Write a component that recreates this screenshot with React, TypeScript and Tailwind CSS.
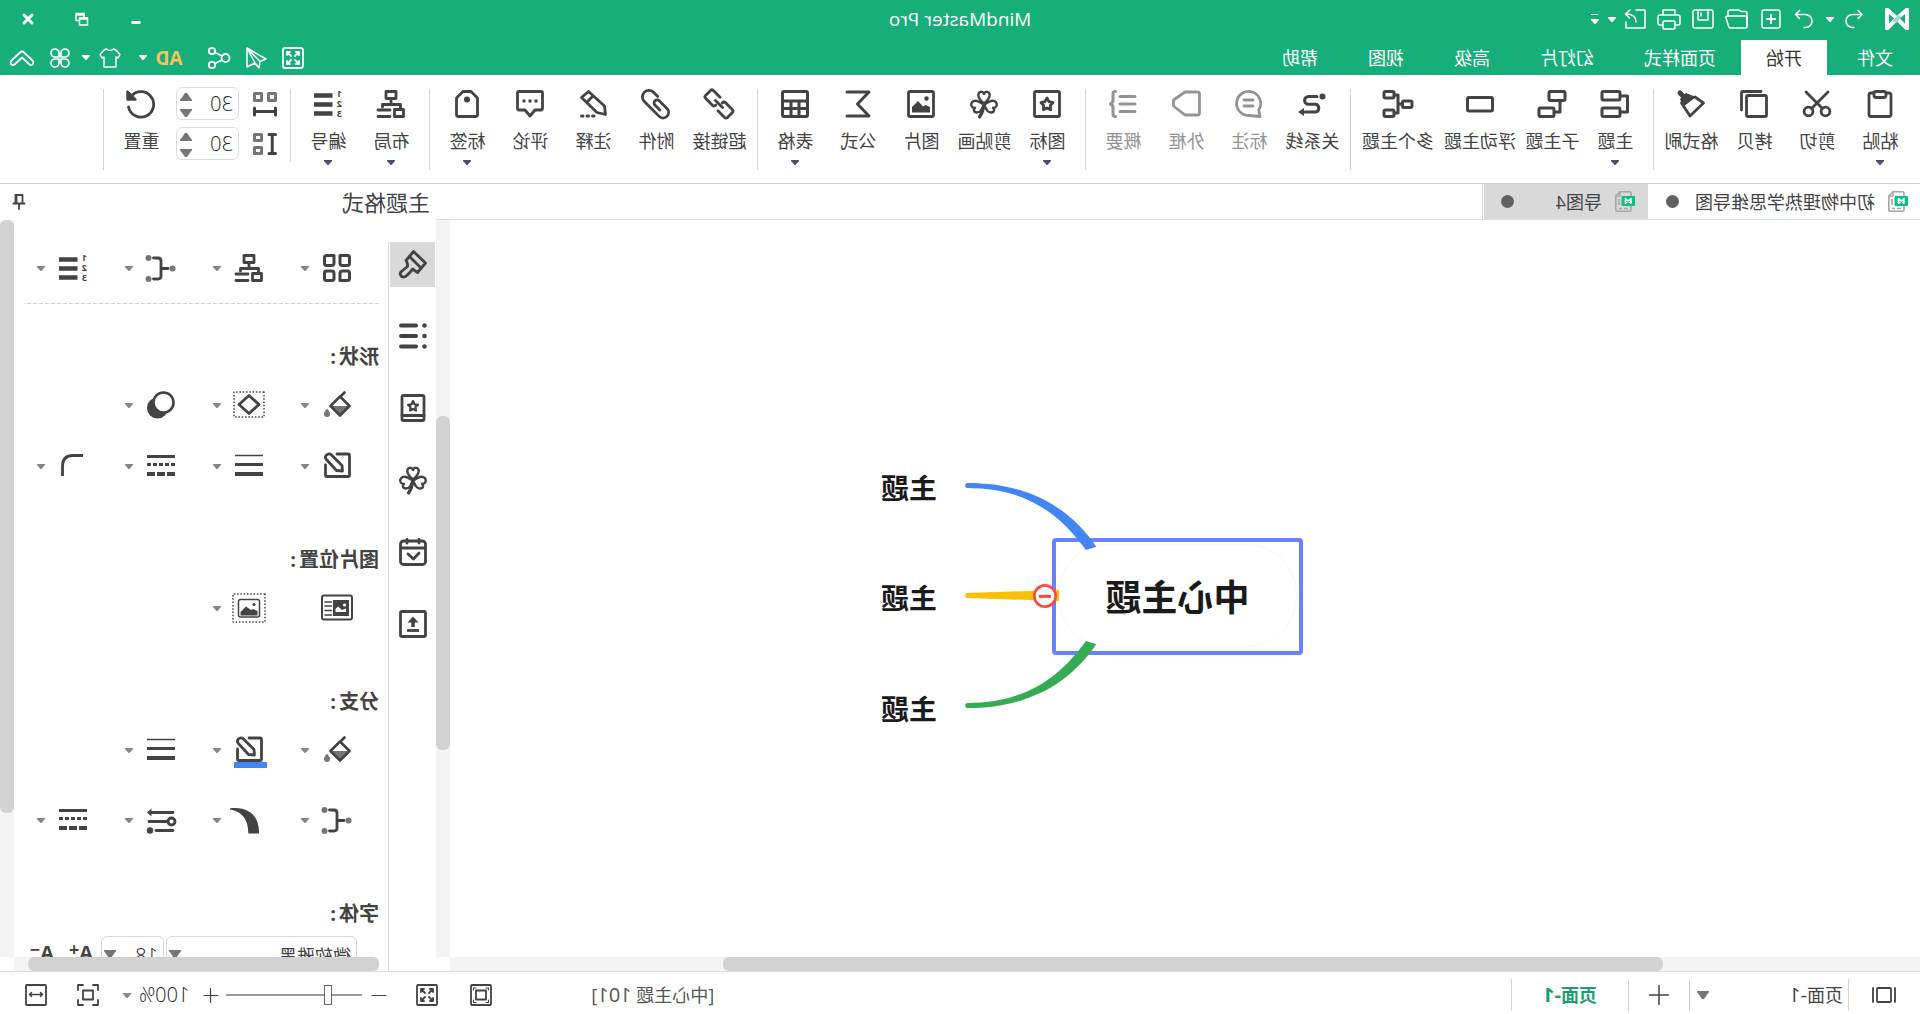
import type { ReactNode } from 'react'

type GlyphProps = { children: ReactNode; w?: number; h?: number; sw?: number }

function Glyph({ children, w = 28, h = 28, sw = 2.4 }: GlyphProps) {
  return (
    <svg
      width={w}
      height={h}
      viewBox={`0 0 ${w} ${h}`}
      fill="none"
      stroke="currentColor"
      strokeWidth={sw}
      strokeLinecap="round"
      strokeLinejoin="round"
      className="block shrink-0 overflow-visible"
      aria-hidden="true"
    >
      {children}
    </svg>
  )
}

const solid = { fill: 'currentColor', stroke: 'none' }

function Caret({ className = 'text-[#757575]' }: { className?: string }) {
  return (
    <svg width="8" height="5" viewBox="0 0 8 5" className={`block shrink-0 ${className}`} aria-hidden="true">
      <path d="M0 0H8V1L4.5 5H3.5L0 1Z" fill="currentColor" />
    </svg>
  )
}

function Triangle({ className = '' }: { className?: string }) {
  return (
    <svg width="12" height="8" viewBox="0 0 12 8" className={`block shrink-0 text-[#757575] ${className}`} aria-hidden="true">
      <path d="M0 0H12V1L7 8H5L0 1Z" fill="currentColor" />
    </svg>
  )
}

/* ---------- shared drawings ---------- */

const clover = (
  <>
    <path d="M14 13.5C11 11 8.3 8.5 8.3 5.3C8.3 1.5 12.6 0.5 14 4C15.4 0.5 19.7 1.5 19.7 5.3C19.7 8.5 17 11 14 13.5Z" />
    <path d="M13.5 14.5C12.5 18.5 10.5 22.5 7 22.5C3.5 22.5 3.2 19 5 17.8C1.5 18.5 0.3 14.5 2 12.3C4.5 9.3 9.5 11.5 13.5 14.5Z" />
    <path d="M14.5 14.5C15.5 18.5 17.5 22.5 21 22.5C24.5 22.5 24.8 19 23 17.8C26.5 18.5 27.7 14.5 26 12.3C23.5 9.3 18.5 11.5 14.5 14.5Z" />
    <path d="M14 14C14.5 19 16 23.5 18.5 27" strokeWidth="3.2" />
  </>
)

const star = 'M14 8L16 11.6L20 12.5L17.3 15.5L17.7 19.6L14 18L10.3 19.6L10.7 15.5L8 12.5L12 11.6Z'

const numbering = (
  <>
    <path d="M9.5 5.5H28M9.5 14.5H28M9.5 23.5H28" strokeWidth="4.5" strokeLinecap="butt" />
    <g {...solid} fontSize="9" fontWeight="700" fontFamily="'Open Sans', sans-serif">
      <text x="0" y="7">1</text>
      <text x="0" y="17">2</text>
      <text x="0" y="27">3</text>
    </g>
  </>
)

const orgChart = (
  <g strokeWidth="2.8">
    <rect x="9" y="1.5" width="10" height="7" />
    <path d="M14 9V14M4.5 18V14.5H22.5V17" />
    <rect x="1.5" y="19.5" width="9" height="7" />
    <path d="M15 20H27M15 26.5H27" />
  </g>
)

const structure = (
  <>
    <g fill="#757575" stroke="none">
      <circle cx="2.5" cy="14.5" r="3" />
      <circle cx="26.5" cy="4" r="3" />
      <circle cx="26.5" cy="25" r="3" />
    </g>
    <path d="M7 14.5H14M21.5 4H17Q14 4 14 7V22Q14 25 17 25H21.5" strokeWidth="2.8" />
  </>
)

const bucket = (
  <>
    <path d="M1.5 15L11 24.5L20.5 15Z" fill="#757575" stroke="none" />
    <path d="M6.5 1.5L11 6M11 5.5L1.5 15L11 24.5L20.5 15Z" strokeWidth="2.6" />
    <path d="M24 17.5C26 20 27 21.5 27 23A3 3 0 0 1 21 23C21 21.5 22 20 24 17.5Z" fill="#757575" stroke="none" />
  </>
)

const penSquare = (
  <g strokeWidth="2.8">
    <path d="M14 2H3Q1.5 2 1.5 3.5V23Q1.5 24.5 3 24.5H24Q25.5 24.5 25.5 23V13" />
    <path d="M20 2.5Q22.5 1 24.5 3Q26.5 5 25 7L14.5 18.5L8.5 19L9 13.5Z" />
  </g>
)

const lineWeights = (
  <g strokeLinecap="butt">
    <path d="M0 3.5H28" strokeWidth="1.5" />
    <path d="M0 12.5H28" strokeWidth="3" />
    <path d="M0 22H28" strokeWidth="4" />
  </g>
)

const dashStyles = (
  <g strokeLinecap="butt">
    <path d="M0 4.5H28" strokeWidth="3" />
    <path d="M0 12.5H28" strokeWidth="3" strokeDasharray="4 2" />
    <path d="M0 22H28" strokeWidth="4" strokeDasharray="8 2" />
  </g>
)

const expandArrows = (
  <path d="M5 8V5H8M5 5L9 9M14 5H17V8M17 5L13 9M5 14V17H8M5 17L9 13M17 14V17H14M17 17L13 13" />
)

const cornerMarks = 'M1 6V1H6M16 1H21V6M1 16V21H6M16 21H21V16'

/* ---------- ribbon data ---------- */

type Tool = { label: string; icon: ReactNode; menu?: boolean; disabled?: boolean }

const groups: Tool[][] = [
  [
    {
      label: '粘贴',
      menu: true,
      icon: (
        <g strokeWidth="2.8">
          <rect x="3" y="3" width="22" height="23.5" rx="2" />
          <rect x="8" y="1.5" width="12" height="6" rx="2" fill="white" />
        </g>
      ),
    },
    {
      label: '剪切',
      icon: (
        <g strokeWidth="2.8">
          <path d="M3 2L19.5 18.5M25 2L8.5 18.5" />
          <circle cx="5.5" cy="21.5" r="4.4" />
          <circle cx="22.5" cy="21.5" r="4.4" />
        </g>
      ),
    },
    {
      label: '拷贝',
      icon: (
        <g strokeWidth="2.8">
          <rect x="1.5" y="5.5" width="20" height="21" rx="1.5" />
          <path d="M7 1.5H25Q26.5 1.5 26.5 3V20" />
        </g>
      ),
    },
    {
      label: '格式刷',
      icon: (
        <>
          <path d="M10 7L1.5 13L15 26L23.5 13" strokeWidth="2.8" />
          <path d="M9 7L19 3L25 9L22 17Z" {...solid} />
          <path d="M20 8L25 3" strokeWidth="5" />
        </>
      ),
    },
  ],
  [
    {
      label: '主题',
      menu: true,
      icon: (
        <g strokeWidth="3">
          <rect x="9" y="1.5" width="18" height="8.5" rx="1.5" />
          <rect x="9" y="18" width="18" height="8.5" rx="1.5" />
          <path d="M8 6H1.5V22H8" />
        </g>
      ),
    },
    {
      label: '子主题',
      icon: (
        <g strokeWidth="3">
          <rect x="1" y="1.5" width="16" height="9" rx="1.5" />
          <rect x="12" y="18" width="15" height="8.5" rx="1.5" />
          <path d="M6 11V22H11" />
        </g>
      ),
    },
    { label: '浮动主题', icon: <rect x="1.5" y="7.5" width="25" height="13.5" rx="1.5" strokeWidth="3" /> },
    {
      label: '多个主题',
      icon: (
        <g strokeWidth="3">
          <rect x="0" y="11" width="9.5" height="6.5" rx="1.5" />
          <rect x="18" y="1.5" width="10" height="6.5" rx="1.5" />
          <rect x="18" y="20" width="10" height="6.5" rx="1.5" />
          <path d="M10 14H14M17 5H14V23H17" />
        </g>
      ),
    },
  ],
  [
    {
      label: '关系线',
      icon: (
        <>
          <circle cx="3.5" cy="6.5" r="3" {...solid} />
          <path d="M9 6.5H17.5A3.9 3.9 0 0 1 17.5 14.3H10.5A3.9 3.9 0 0 0 10.5 22H21" strokeWidth="3" />
          <path d="M22 18L28 22L22 26Z" {...solid} />
        </>
      ),
    },
    {
      label: '标注',
      disabled: true,
      icon: (
        <g strokeWidth="2.8">
          <path d="M3 26.5L4.3 20A12 12 0 1 1 14 25.5Z" />
          <path d="M10 10H19M10 16H19" />
        </g>
      ),
    },
    {
      label: '外框',
      disabled: true,
      icon: <path d="M2.5 2H15L26.5 10V16L15 25H2.5Q0.5 25 0.5 23V4Q0.5 2 2.5 2Z" strokeWidth="2.8" />,
    },
    {
      label: '概要',
      disabled: true,
      icon: (
        <g strokeWidth="3">
          <path d="M2 6.5H17M2 14H17M2 21.5H17" />
          <path d="M21.5 1.5H22Q24 1.5 24 4V10Q24 13 26.5 14Q24 15 24 18V24Q24 26.5 22 26.5H21.5" />
        </g>
      ),
    },
  ],
  [
    {
      label: '图标',
      menu: true,
      icon: (
        <g strokeWidth="2.8">
          <rect x="1.5" y="1.5" width="25" height="25" rx="1.5" />
          <path d={star} />
        </g>
      ),
    },
    { label: '剪贴画', icon: clover },
    {
      label: '图片',
      icon: (
        <>
          <rect x="1.5" y="1.5" width="25" height="25" rx="1.5" strokeWidth="2.8" />
          <path d="M5 17L9.5 15L12 16.5L17 11L23 17V22.5H5Z" {...solid} />
          <circle cx="8.5" cy="8.5" r="2.2" {...solid} />
        </>
      ),
    },
    { label: '公式', icon: <path d="M25 2H3L14.5 14L3 26H25" strokeWidth="3" /> },
    {
      label: '表格',
      menu: true,
      icon: (
        <g strokeWidth="3">
          <rect x="1.5" y="1.5" width="25" height="25" rx="1.5" />
          <path d="M1.5 11H26.5M1.5 18.5H26.5M10 11V26.5M18 11V26.5" />
        </g>
      ),
    },
  ],
  [
    {
      label: '超链接',
      icon: (
        <g transform="rotate(-45 14 14)" strokeWidth="2.8">
          <path d="M10 19.5H0.5Q-1.5 19.5 -1.5 17.5V10.5Q-1.5 8.5 0.5 8.5H10.5Q12.5 8.5 12.5 11" />
          <path d="M18 8.5H27.5Q29.5 8.5 29.5 10.5V17.5Q29.5 19.5 27.5 19.5H17.5Q15.5 19.5 15.5 17" />
          <path d="M9 14H19" />
        </g>
      ),
    },
    {
      label: '附件',
      icon: (
        <path
          transform="rotate(-45 14 14)"
          d="M18 7.5H24A6.5 6.5 0 0 1 24 20.5H3A5.5 5.5 0 0 1 3 9.5H14A3 3 0 0 1 14 15.5H7"
          strokeWidth="2.8"
        />
      ),
    },
    {
      label: '注释',
      icon: (
        <>
          <path d="M18.5 1.5L2.5 16L1.5 24.5L10 22.5L25.5 7.5ZM14 6L20.5 12.5" strokeWidth="2.8" />
          <path d="M13 26H14.5M18.5 26H20M24 26H25.5" strokeWidth="3" />
        </>
      ),
    },
    {
      label: '评论',
      icon: (
        <>
          <path
            d="M3 1.5H25Q26.5 1.5 26.5 3V18Q26.5 20 25 20H19L14 26L9 20H3Q1.5 20 1.5 18V3Q1.5 1.5 3 1.5Z"
            strokeWidth="2.8"
          />
          <path d="M6.5 11H9.5M12.5 11H15.5M18.5 11H21.5" strokeWidth="3" strokeLinecap="butt" />
        </>
      ),
    },
    {
      label: '标签',
      menu: true,
      icon: (
        <>
          <path d="M10 1.5H18L24.5 8V24.5Q24.5 26.5 22.5 26.5H5.5Q3.5 26.5 3.5 24.5V8Z" strokeWidth="2.8" />
          <circle cx="14" cy="9.5" r="3" {...solid} />
        </>
      ),
    },
  ],
  [
    { label: '布局', menu: true, icon: orgChart },
    { label: '编号', menu: true, icon: numbering },
  ],
]

function ToolButton({ label, icon, menu, disabled }: Tool) {
  return (
    <button
      type="button"
      disabled={disabled}
      className={`flex flex-col items-center pt-px ${label.length > 3 ? 'w-[82px]' : 'w-[63px]'} ${
        disabled ? 'text-[#949494]' : 'text-[#434343]'
      }`}
    >
      <Glyph>{icon}</Glyph>
      <span className="mt-[11px] whitespace-nowrap leading-6">{label}</span>
      {menu && <Caret className="mt-[7px] text-[#4a4f63]" />}
    </button>
  )
}

function Spinner({ label }: { label: string }) {
  return (
    <div className="flex h-[33px] w-[63px] items-center justify-between rounded-md border border-[#dcdcdc] pl-[5px] pr-[3px]">
      <input
        aria-label={label}
        defaultValue="30"
        className="w-8 bg-transparent text-[20px] font-light text-[#222222] outline-none"
      />
      <div className="flex flex-col gap-2 pt-[3px]">
        <button type="button" aria-label={`${label}增加`}>
          <Triangle className="rotate-180" />
        </button>
        <button type="button" aria-label={`${label}减少`}>
          <Triangle />
        </button>
      </div>
    </div>
  )
}

/* ---------- header ---------- */

const fileActions = [
  { name: '重做', icon: <path d="M15.5 1.5L19.5 5.5L15.5 9.5M19.5 5.5H9.5A6.5 6.5 0 0 0 9.5 18.5H11" /> },
  {
    name: '新建',
    icon: (
      <>
        <rect x="1" y="1" width="18" height="18" rx="2" />
        <path d="M10 6V14M6 10H14" strokeWidth="2" />
      </>
    ),
  },
  {
    name: '打开',
    icon: (
      <>
        <path d="M0 18V4Q0 2.5 1.5 2.5H6L8 1H17Q19 1 19 3V7" />
        <path d="M0 17.5V9Q0 7 2 7H19Q21.5 7 21 9L18.5 17Q18 19 16.5 19H1.5Q0 19 0 17.5Z" />
      </>
    ),
  },
  {
    name: '保存',
    icon: (
      <>
        <rect x="0" y="1" width="20" height="18" rx="2" />
        <path d="M5 1V11H15V1M12 4V7" />
      </>
    ),
  },
  {
    name: '打印',
    icon: (
      <>
        <path d="M4 6V1H16V6M4 16H1Q-1 16 -1 14V8Q-1 6 1 6H19Q21 6 21 8V14Q21 16 19 16H16" />
        <rect x="4" y="12" width="12" height="8" rx="1" />
      </>
    ),
  },
  {
    name: '导出',
    icon: <path d="M9 1H0V19H19V13M9 13Q9 5 19 5M15 1L19.5 5L15.5 9" />,
  },
]

const menuTabs = ['文件', '开始', '页面样式', '幻灯片', '高级', '视图', '帮助']

function TitleBar() {
  return (
    <div className="grid h-10 grid-cols-[1fr_auto_1fr] items-center pb-[2px] text-white">
      <div className="flex items-center pl-[11px]">
        <svg width="24" height="22" viewBox="0 0 24 22" className="mr-[15px] block" aria-label="MindMaster" role="img">
          <path d="M2 1.5V20.5L12 10.5Z" fill="none" stroke="white" strokeWidth="4" strokeLinejoin="round" />
          <path d="M22 1.5V20.5L12 10.5Z" fill="none" stroke="white" strokeWidth="4" strokeLinejoin="round" />
          <path d="M9 8L14.5 14" stroke="#9fdcc6" strokeWidth="4" />
        </svg>
        <button type="button" aria-label="撤销" className="flex w-8 justify-center">
          <Glyph w={20} h={20} sw={1.5}>
            <path d="M6 1.5L2 5.5L6 9.5M2 5.5H11.5A6.5 6.5 0 0 1 11.5 18.5H10" />
          </Glyph>
        </button>
        <button type="button" aria-label="撤销记录" className="flex w-4 justify-center">
          <Caret className="text-white" />
        </button>
        {fileActions.map((a) => (
          <button key={a.name} type="button" aria-label={a.name} className="flex w-[34px] justify-center">
            <Glyph w={20} h={20} sw={1.5}>
              {a.icon}
            </Glyph>
          </button>
        ))}
        <button type="button" aria-label="导出选项" className="flex w-3 justify-center">
          <Caret className="text-white" />
        </button>
        <button type="button" aria-label="自定义工具栏" className="flex w-[22px] flex-col items-center gap-1">
          <span className="h-px w-[7px] bg-white" />
          <Caret className="text-white" />
        </button>
      </div>
      <h1 className="text-[19px] leading-6">MindMaster Pro</h1>
      <div className="flex items-center justify-end pr-px">
        <button type="button" aria-label="最小化" className="flex w-[54px] justify-center">
          <Glyph w={12} h={12}>
            <path d="M1.5 9.5H10.5" strokeWidth="3" strokeLinecap="butt" />
          </Glyph>
        </button>
        <button type="button" aria-label="还原" className="flex w-[54px] justify-center">
          <Glyph w={12} h={12}>
            <g strokeWidth="1.5" strokeLinejoin="miter">
              <path d="M4 4V0.5H12V7.5H9" />
              <path d="M3.5 1.5H12" strokeWidth="2.5" strokeLinecap="butt" />
              <rect x="0.5" y="5" width="8" height="7" />
              <path d="M0 5.5H9" strokeWidth="2.5" strokeLinecap="butt" />
            </g>
          </Glyph>
        </button>
        <button type="button" aria-label="关闭" className="flex w-[54px] justify-center">
          <Glyph w={12} h={12}>
            <path d="M2 2L10 10M10 2L2 10" strokeWidth="3" />
          </Glyph>
        </button>
      </div>
    </div>
  )
}

function MenuBar() {
  return (
    <div className="flex h-[35px] items-stretch justify-between text-white">
      <nav className="flex">
        {menuTabs.map((t, i) => (
          <button
            key={t}
            type="button"
            className={`${i === 0 ? 'pl-[27px] pr-[30px]' : 'px-[25px]'} ${t === '开始' ? 'bg-white text-[#333333]' : ''}`}
          >
            {t}
          </button>
        ))}
      </nav>
      <div className="flex items-center pr-[2px]">
        <button type="button" aria-label="全屏" className="flex w-[37px] justify-center">
          <Glyph w={22} h={22} sw={1.8}>
            <rect x="1" y="1" width="20" height="20" rx="2" />
            {expandArrows}
          </Glyph>
        </button>
        <button type="button" aria-label="发送" className="flex w-[37px] justify-center">
          <Glyph w={22} h={22} sw={1.5}>
            <path d="M20 1L1 12L7 14.5L8 21L12 16L20 20ZM20 1L7 14.5M20 1L12 16" />
          </Glyph>
        </button>
        <button type="button" aria-label="分享" className="flex w-[37px] justify-center">
          <Glyph w={22} h={22} sw={1.8}>
            <circle cx="4.5" cy="11" r="4" />
            <circle cx="18" cy="4" r="3.2" />
            <circle cx="18" cy="18" r="3.2" />
            <path d="M8 9L15 5.5M8 13L15 16.5" />
          </Glyph>
        </button>
        <button type="button" className="ml-[14px] w-9 text-[19px] font-bold text-[#f9c35c]">
          AD
        </button>
        <button type="button" aria-label="广告选项" className="flex w-4 justify-center">
          <Caret className="text-white" />
        </button>
        <button type="button" aria-label="皮肤" className="ml-[9px] flex w-8 justify-center">
          <Glyph w={20} h={20} sw={1.5}>
            <path d="M6.5 1Q10 4 13.5 1L16 2L20 6.5L18 10L16 9V19H4V9L2 10L0 6.5L4 2Z" />
          </Glyph>
        </button>
        <button type="button" aria-label="皮肤选项" className="flex w-4 justify-center">
          <Caret className="text-white" />
        </button>
        <button type="button" aria-label="应用" className="flex w-9 justify-center">
          <Glyph w={20} h={20} sw={1.7}>
            <path d="M9 9H5A4 4 0 1 1 9 5ZM11 9V5A4 4 0 1 1 15 9ZM9 11V15A4 4 0 1 1 5 11ZM11 11H15A4 4 0 1 1 11 15Z" />
          </Glyph>
        </button>
        <button type="button" aria-label="收起功能区" className="flex w-10 justify-center">
          <Glyph w={26} h={16} sw={1.8}>
            <path d="M13 1.5Q14 1.5 15 2.5L24 11Q25 13 23.5 14.5Q22 15.5 20.5 14.5L13 7.5L5.5 14.5Q4 15.5 2.5 14.5Q1 13 2 11L11 2.5Q12 1.5 13 1.5Z" />
          </Glyph>
        </button>
      </div>
    </div>
  )
}

function Ribbon() {
  return (
    <div className="flex border-b border-[#cfcfcf] pb-[13px] pl-[2px] pt-[14px] text-[#434343]">
      {groups.map((g, i) => (
        <div
          key={i}
          className={`flex items-start border-r border-[#d2d2d2] px-[6px] ${i === groups.length - 1 ? 'h-[73px]' : 'h-[81px]'}`}
        >
          {g.map((t) => (
            <ToolButton key={t.label} {...t} />
          ))}
        </div>
      ))}
      <div className="flex h-[81px] items-start border-r border-[#d2d2d2] pl-[13px] pr-[6px]">
        <div className="-mt-[2px] flex flex-col gap-[7px]">
          <div className="flex items-center gap-[14px]">
            <Glyph w={24} h={24}>
              <g stroke="#757575" strokeWidth="3">
                <rect x="1.5" y="1.5" width="7" height="7" />
                <rect x="15.5" y="1.5" width="7" height="7" />
              </g>
              <path d="M1.5 16V23M22.5 16V23M1.5 19.5H22.5" strokeWidth="3" />
            </Glyph>
            <Spinner label="水平间距" />
          </div>
          <div className="flex items-center gap-[14px]">
            <Glyph w={24} h={24}>
              <g stroke="#757575" strokeWidth="3">
                <rect x="15.5" y="2.5" width="7" height="6" />
                <rect x="15.5" y="15.5" width="7" height="6" />
              </g>
              <path d="M1.5 2.5H8M1.5 21.5H8M4.75 2.5V21.5" strokeWidth="3" />
            </Glyph>
            <Spinner label="垂直间距" />
          </div>
        </div>
        <div className="ml-[3px]">
          <ToolButton
            label="重置"
            icon={
              <>
                <path d="M26.5 17A12.7 12.7 0 1 1 24 6.5" strokeWidth="2.8" />
                <path d="M27.5 1.5V9.5H19.5Z" fill="currentColor" />
              </>
            }
          />
        </div>
      </div>
    </div>
  )
}

/* ---------- canvas ---------- */

function DocIcon() {
  return (
    <svg width="20" height="21" viewBox="0 0 20 21" fill="none" className="block shrink-0" aria-hidden="true">
      <path d="M4 15V19Q4 20.2 5.2 20.2H18Q19.2 20.2 19.2 19V5L15 0.8H5.2Q4 0.8 4 2V5" stroke="#a6a6a6" strokeWidth="1.6" />
      <path d="M15 1V5H19M7 17.5H11M13 17.5H16M16 8V14" stroke="#a6a6a6" strokeWidth="1.6" />
      <rect x="0" y="5" width="13.5" height="10" rx="1" fill="#0bbf82" />
      <path d="M4 12.5V7.5L9.5 12.5V7.5L4 12.5" stroke="white" strokeWidth="1.6" strokeLinejoin="round" />
    </svg>
  )
}

function DocumentTabs() {
  return (
    <div className="flex h-9 border-b border-[#dedede] text-[#434343]">
      <button type="button" className="flex w-[272px] items-center bg-white pl-3 pr-[18px]">
        <DocIcon />
        <span className="ml-[13px] flex-1 whitespace-nowrap text-left">初中物理热学思维导图</span>
        <span className="size-[13px] rounded-full bg-[#616161]" />
      </button>
      <button type="button" className="mr-px flex w-[164px] items-center bg-[#d9d9d9] pl-[13px] pr-[17px]">
        <DocIcon />
        <span className="ml-[13px] flex-1 whitespace-nowrap text-left">导图4</span>
        <span className="size-[13px] rounded-full bg-[#616161]" />
      </button>
      <span className="w-px bg-[#d9d9d9]" />
    </div>
  )
}

function Canvas() {
  const topic = 'absolute left-[983px] whitespace-nowrap text-[28px] font-bold leading-10 text-[#1a1a1a]'
  return (
    <div className="relative flex-1 overflow-hidden bg-white">
      <div className="absolute left-[623px] top-[324px] flex h-[103px] w-[239px] items-center justify-center whitespace-nowrap rounded-[50px] border border-[#f7f7f7] pt-1 text-[36px] font-bold text-[#1a1a1a]">
        中心主题
      </div>
      <div className="absolute left-[617px] top-[318px] h-[117px] w-[251px] rounded border-4 border-[#6783ff]" />
      <svg
        width="480"
        height="300"
        viewBox="0 0 1440 900"
        className="absolute left-[580px] top-[230px]"
        aria-hidden="true"
      >
        <path d="M731 290C820 160 950 99 1117 99A7.5 7.5 0 0 1 1117 114C950 114 845 185 762 300Z" fill="#4285f4" />
        <path d="M843 420L1117 429A7.5 7.5 0 0 1 1117 444L843 453Z" fill="#fbbf05" />
        <path d="M731 583C820 713 950 774 1117 774A7.5 7.5 0 0 0 1117 759C950 759 845 688 762 573Z" fill="#35ab53" />
        <circle cx="885" cy="438" r="32" fill="white" stroke="#fc4a41" strokeWidth="8" />
        <path d="M867 439H903" stroke="#fc4a41" strokeWidth="9" />
      </svg>
      <span className={`${topic} top-[248px]`}>主题</span>
      <span className={`${topic} top-[358px]`}>主题</span>
      <span className={`${topic} top-[469px]`}>主题</span>
    </div>
  )
}

function Workspace() {
  return (
    <section className="flex min-w-0 flex-1 flex-col">
      <DocumentTabs />
      <div className="flex min-h-0 flex-1">
        <div className="flex min-w-0 flex-1 flex-col">
          <Canvas />
          <div className="flex h-[14px] bg-[#f4f4f4]">
            <div className="grow-[257]" />
            <div className="grow-[940] rounded-md bg-[#d2d2d2]" />
            <div className="grow-[273]" />
          </div>
        </div>
        <div className="mb-[14px] flex w-[14px] flex-col bg-[#f4f4f4]">
          <div className="grow-[196]" />
          <div className="grow-[334] rounded-md bg-[#d2d2d2]" />
          <div className="grow-[207]" />
        </div>
      </div>
    </section>
  )
}

/* ---------- format panel ---------- */

const sideTabs = [
  {
    name: '主题格式',
    icon: (
      <g strokeWidth="2.8">
        <path d="M13.5 1.5L1.5 13L9.5 22.5L14.5 19Q16 22 21.5 26.5Q25 28 26.5 25Q27.5 22.5 25 21L19.5 16.5Q19 13.5 21 10.5Z" />
        <path d="M17.5 6.5L6 18" />
      </g>
    ),
  },
  {
    name: '大纲',
    icon: (
      <>
        <path d="M11 3.5H26M11 14H26M11 24.5H26" strokeWidth="4" />
        <g {...solid}>
          <circle cx="2.5" cy="3.5" r="2.3" />
          <circle cx="2.5" cy="14" r="2.3" />
          <circle cx="2.5" cy="24.5" r="2.3" />
        </g>
      </>
    ),
  },
  {
    name: '图标',
    icon: (
      <g strokeWidth="2.8">
        <rect x="3" y="1.5" width="22" height="25" rx="1.5" />
        <path d="M3 21.5H25" />
        <path d="M14 7L15.5 10.3L19 10.8L16.5 13L17 16.5L14 15L11 16.5L11.5 13L9 10.8L12.5 10.3Z" strokeWidth="2.2" />
      </g>
    ),
  },
  { name: '剪贴画', icon: clover },
  {
    name: '任务',
    icon: (
      <g strokeWidth="2.8">
        <rect x="1.5" y="3" width="25" height="23.5" rx="3" />
        <path d="M2 10H26M8 1.5V5M20 1.5V5M8 15L13.500 21L19 16" />
      </g>
    ),
  },
  {
    name: '导出',
    icon: (
      <>
        <rect x="1.5" y="1.5" width="25" height="25" rx="1.5" strokeWidth="2.8" />
        <path d="M8 20.5H20" strokeWidth="2.8" strokeLinecap="butt" />
        <path d="M14 17V11" strokeWidth="3.5" strokeLinecap="butt" />
        <path d="M8.5 12.5L14 6.5L19.5 12.5Z" {...solid} />
      </>
    ),
  },
]

const pictureFrame = (
  <>
    <rect x="-2" y="0" width="32" height="28" strokeWidth="1.5" strokeDasharray="1.5 1.8" strokeLinecap="butt" />
    <rect x="3.5" y="5.5" width="21" height="17.5" rx="2" strokeWidth="1.5" />
    <path d="M5.5 17L10 15L12 16L17 12.5L22.5 18V21.5H5.5Z" {...solid} />
    <circle cx="9" cy="10.5" r="1.6" {...solid} />
  </>
)

type Option = { name: string; icon: ReactNode; color?: string; plain?: boolean }

const layoutRow: Option[] = [
  {
    name: '主题样式',
    icon: (
      <g strokeWidth="3">
        <path d="M3 1.5H11V9Q11 11.5 8.5 11.5H3.5Q1.5 11.5 1.5 9V3.5Q1.5 1.5 3 1.5Z" />
        <path d="M17 1.5H24.5Q26.5 1.5 26.5 3.5V9Q26.5 11.5 24.5 11.5H19.5Q17 11.5 17 9Z" />
        <path d="M3.5 17H8.5Q11 17 11 19.5V26.5H3.5Q1.5 26.5 1.5 24.5V19Q1.5 17 3.5 17Z" />
        <path d="M19.5 17H24.5Q26.5 17 26.5 19V24.5Q26.5 26.5 24.5 26.5H19.5Q17 26.5 17 24.5V19.5Q17 17 19.5 17Z" />
      </g>
    ),
  },
  { name: '布局方向', icon: orgChart },
  { name: '连接结构', icon: structure },
  { name: '编号样式', icon: numbering },
]

const shapeRow: Option[] = [
  { name: '形状填充', icon: bucket },
  {
    name: '形状类型',
    icon: (
      <>
        <rect x="-1" y="1" width="30" height="25" strokeWidth="1.5" strokeDasharray="1.5 1.8" strokeLinecap="butt" />
        <path d="M14 4.5L24 13.5L14 22.5L4 13.5Z" strokeWidth="2.8" />
      </>
    ),
  },
  {
    name: '阴影',
    icon: (
      <>
        <circle cx="17.5" cy="17" r="10.5" {...solid} />
        <circle cx="11.5" cy="11.5" r="10" fill="white" strokeWidth="2.6" />
      </>
    ),
  },
]

const outlineRow: Option[] = [
  { name: '边框颜色', icon: penSquare },
  { name: '边框粗细', icon: lineWeights },
  { name: '边框虚线', icon: dashStyles },
  { name: '圆角', icon: <path d="M4 3.5H14Q24.5 3.5 24.5 14V24" strokeWidth="2.8" strokeLinecap="butt" /> },
]

const imageRow: Option[] = [
  {
    name: '图片布局',
    plain: true,
    icon: (
      <>
        <rect x="-1" y="1.5" width="30" height="24" rx="2" strokeWidth="2" />
        <rect x="2" y="6" width="16" height="16" {...solid} />
        <path d="M5 18V14.5L9 16L13 12.5L15.5 15V18Z" fill="white" stroke="none" />
        <circle cx="6.5" cy="11" r="1.6" fill="white" stroke="none" />
        <path d="M19.5 8H26M19.5 12H26M19.5 16.5H26M19.5 21H26" strokeWidth="1.6" />
      </>
    ),
  },
  { name: '图片位置', icon: pictureFrame },
]

const branchRow: Option[] = [
  { name: '分支填充', icon: bucket },
  { name: '分支颜色', icon: penSquare, color: '#4285f4' },
  { name: '分支粗细', icon: lineWeights },
]

const branchStyleRow: Option[] = [
  { name: '分支类型', icon: structure },
  { name: '分支渐变', icon: <path d="M33 2.3C13 0 3.5 11 4 27.5H14.7C14.5 16 19 6 33 3.5Z" {...solid} /> },
  {
    name: '箭头',
    icon: (
      <>
        <path d="M2 6.5H24M9 15.5H26M2 24.5H19" strokeWidth="2.8" />
        <path d="M23.5 2.5V10.5L28 6.5Z" {...solid} />
        <circle cx="3.5" cy="15.5" r="3.5" strokeWidth="2.8" />
        <circle cx="25" cy="24.5" r="3.2" {...solid} />
      </>
    ),
  },
  { name: '分支虚线', icon: dashStyles },
]

function OptionRow({ options, className }: { options: Option[]; className: string }) {
  return (
    <div className={`flex h-8 items-center gap-[38px] pl-7 ${className}`}>
      {options.map((o) => (
        <button key={o.name} type="button" aria-label={o.name} className="relative flex w-[50px] items-center gap-[14px]">
          <Glyph>{o.icon}</Glyph>
          {!o.plain && <Caret className="text-[#858585]" />}
          {o.color && (
            <span className="absolute -bottom-1 -left-1 h-[6px] w-[33px]" style={{ backgroundColor: o.color }} />
          )}
        </button>
      ))}
    </div>
  )
}

function SectionTitle({ children, className }: { children: ReactNode; className: string }) {
  return (
    <h3 className={`text-[20px] font-bold leading-7 ${className}`}>
      {children}
      <span className="ml-[3px]">:</span>
    </h3>
  )
}

function FormatPanel() {
  return (
    <aside className="flex w-[436px] shrink-0 flex-col text-[#434343]">
      <div className="flex h-9 items-center justify-between pl-[6px] pr-[13px]">
        <h2 className="text-[22px] leading-8">主题格式</h2>
        <button type="button" aria-label="固定面板">
          <Glyph w={12} h={16} sw={1.8}>
            <path d="M2.5 1H9.5V9.5H2.5ZM0.5 9.5H11.5M6 10V15M8.5 1V9" />
          </Glyph>
        </button>
      </div>
      <div className="flex min-h-0 flex-1">
        <div className="flex flex-col pl-px pt-[22px]">
          <div className="flex flex-1 flex-col gap-[27px] border-r border-[#dcdcdc] pr-px">
            {sideTabs.map((t, i) => (
              <button
                key={t.name}
                type="button"
                aria-label={t.name}
                className={`flex size-[45px] items-center justify-center pb-px pr-px ${i === 0 ? 'bg-[#d9d9d9]' : ''}`}
              >
                <Glyph>{t.icon}</Glyph>
              </button>
            ))}
          </div>
        </div>
        <div className="flex min-w-0 flex-1 flex-col pl-[9px]">
          <div className="min-h-0 flex-1 overflow-hidden">
            <OptionRow options={layoutRow} className="mt-8" />
            <div className="mr-[10px] mt-[19px] h-px bg-[repeating-linear-gradient(to_right,#cfcfcf_0_4px,transparent_4px_6px)]" />
            <SectionTitle className="mt-[39px]">形状</SectionTitle>
            <OptionRow options={shapeRow} className="mt-[18px]" />
            <OptionRow options={outlineRow} className="mt-[29px]" />
            <SectionTitle className="mt-16">图片位置</SectionTitle>
            <OptionRow options={imageRow} className="mt-[18px]" />
            <SectionTitle className="mt-16">分支</SectionTitle>
            <OptionRow options={branchRow} className="mt-[18px]" />
            <OptionRow options={branchStyleRow} className="mt-[38px]" />
            <SectionTitle className="mt-16">字体</SectionTitle>
            <div className="mt-2 flex items-start pl-[22px]">
              <label className="relative mr-[2px] block">
                <select
                  aria-label="字体"
                  className="block h-10 w-[191px] appearance-none rounded-md border border-[#d6d6d6] pl-[5px] outline-none"
                >
                  <option>微软雅黑</option>
                </select>
                <Triangle className="pointer-events-none absolute right-[3px] top-[14px]" />
              </label>
              <label className="relative mr-[8px] block">
                <select
                  aria-label="字号"
                  className="block h-10 w-[63px] appearance-none rounded-md border border-[#d6d6d6] pl-[5px] text-[20px] font-light text-[#222222] outline-none"
                >
                  <option>18</option>
                </select>
                <Triangle className="pointer-events-none absolute right-[3px] top-[14px]" />
              </label>
              <button type="button" aria-label="增大字号" className="flex w-[39px] items-start pt-[3px] text-[20px] font-bold leading-7">
                A<span className="text-[18px] leading-5">+</span>
              </button>
              <button type="button" aria-label="减小字号" className="flex items-start pt-[3px] text-[20px] font-bold leading-7">
                A<span className="text-[18px] leading-5">−</span>
              </button>
            </div>
          </div>
          <div className="flex h-[14px] bg-[#f4f4f4]">
            <div className="grow-[351] rounded-md bg-[#d2d2d2]" />
            <div className="grow-[14]" />
          </div>
        </div>
        <div className="mb-[14px] flex w-[14px] flex-col bg-[#f4f4f4]">
          <div className="grow-[593] rounded-md bg-[#d2d2d2]" />
          <div className="grow-[144]" />
        </div>
      </div>
    </aside>
  )
}

/* ---------- status bar ---------- */

function StatusBar() {
  return (
    <footer className="flex h-[43px] items-center border-t border-[#dcdcdc] pt-1 text-[#434343]">
      <button type="button" aria-label="页面列表" className="flex w-[71px] justify-center">
        <Glyph w={24} h={16} sw={1.8}>
          <path d="M1 1V15M23 1V15" />
          <rect x="5" y="1" width="14" height="14" rx="1" />
        </Glyph>
      </button>
      <div className="flex h-8 w-[160px] items-center justify-between border-x border-[#d2d2d2] pl-[5px] pr-[7px]">
        <span>
          页面<span className="text-[20px]">-1</span>
        </span>
        <button type="button" aria-label="切换页面">
          <Triangle />
        </button>
      </div>
      <button type="button" aria-label="添加页面" className="flex h-8 w-[61px] items-center justify-center border-r border-[#d2d2d2]">
        <Glyph w={20} h={20} sw={1.5}>
          <path d="M10 0.5V19.5M0.5 10H19.5" />
        </Glyph>
      </button>
      <button type="button" className="h-8 w-[117px] border-r border-[#d2d2d2] font-bold text-[#1f9d70]">
        页面<span className="text-[20px]">-1</span>
      </button>
      <div className="flex flex-1 items-center justify-end pr-[25px]">
        <span className="mr-[99px] whitespace-pre text-[#555555]">
          [中心主题 <span className="text-[20px]">101</span>]
        </span>
        <button type="button" aria-label="适应页面" className="mr-[32px]">
          <Glyph w={22} h={22} sw={1.8}>
            <rect x="1" y="1" width="20" height="20" rx="1" />
            <rect x="6" y="6.5" width="10" height="9" />
            <path d="M3.5 6V4H6M16 4H18.5V6M3.5 16V18.5H6M16 18.5H18.5V16" strokeWidth="1.2" />
          </Glyph>
        </button>
        <button type="button" aria-label="全屏显示" className="mr-[30px]">
          <Glyph w={22} h={22} sw={1.8}>
            <rect x="1" y="1" width="20" height="20" rx="1" />
            {expandArrows}
          </Glyph>
        </button>
        <button type="button" aria-label="缩小" className="mr-[10px]">
          <Glyph w={14} h={14} sw={1.2}>
            <path d="M0 7.5H14" />
          </Glyph>
        </button>
        <input
          type="range"
          aria-label="缩放"
          min={0}
          max={100}
          defaultValue={24}
          className="mr-2 h-5 w-[136px] appearance-none bg-transparent [&::-webkit-slider-runnable-track]:h-[2px] [&::-webkit-slider-runnable-track]:bg-[#9b9b9b] [&::-webkit-slider-thumb]:-mt-[9px] [&::-webkit-slider-thumb]:h-5 [&::-webkit-slider-thumb]:w-2 [&::-webkit-slider-thumb]:appearance-none [&::-webkit-slider-thumb]:border [&::-webkit-slider-thumb]:border-[#666666] [&::-webkit-slider-thumb]:bg-white"
        />
        <button type="button" aria-label="放大" className="mr-[15px]">
          <Glyph w={14} h={14} sw={1.2}>
            <path d="M0 7.5H14M7.5 0.5V14.5" />
          </Glyph>
        </button>
        <button type="button" className="mr-6 flex items-center gap-2 text-[20px] font-light text-[#222222]">
          100%
          <Caret className="text-[#858585]" />
        </button>
        <button type="button" aria-label="实际大小" className="mr-[30px]">
          <Glyph w={22} h={22} sw={1.8}>
            <path d={cornerMarks} />
            <rect x="6" y="6.5" width="10" height="9" />
          </Glyph>
        </button>
        <button type="button" aria-label="适应宽度">
          <Glyph w={22} h={22} sw={1.8}>
            <rect x="1" y="1" width="20" height="20" rx="1" />
            <path d="M4.5 10.5H17.5M6.5 8.5L4.5 10.5L6.5 12.5M15.5 8.5L17.5 10.5L15.5 12.5" strokeWidth="1.5" />
          </Glyph>
        </button>
      </div>
    </footer>
  )
}

function App() {
  return (
    <div className="flex h-screen -scale-x-100 flex-col overflow-hidden bg-white font-['Open_Sans','Noto_Sans_CJK_SC',sans-serif] text-[18px] leading-6">
      <header>
        <div className="bg-[#16ae79]">
          <TitleBar />
          <MenuBar />
        </div>
        <Ribbon />
      </header>
      <main className="flex min-h-0 flex-1">
        <Workspace />
        <FormatPanel />
      </main>
      <StatusBar />
    </div>
  )
}

export default App
